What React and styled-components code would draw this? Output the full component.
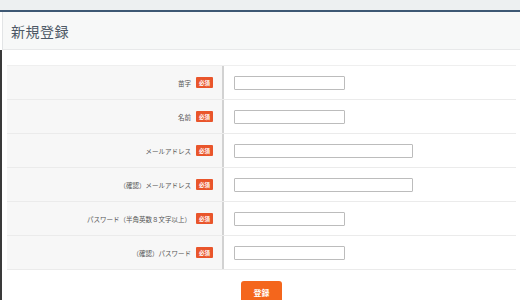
import React from 'react';
import styled, { createGlobalStyle } from 'styled-components';

const GlobalStyle = createGlobalStyle`
  html, body {
    margin: 0;
    padding: 0;
    background: #ffffff;
  }
  body {
    width: 520px;
    height: 300px;
    overflow: hidden;
    font-family: "Noto Sans CJK JP", "Noto Sans", sans-serif;
  }
`;

const StyledPage = styled.div`
  width: 520px;
  height: 300px;
  overflow: hidden;
  display: flex;
  flex-direction: column;
`;

const StyledTopStrip = styled.div`
  flex-shrink: 0;
  height: 10px;
  background-color: #edf0f1;
  border-bottom: 2px solid #3d5874;
`;

const StyledHeader = styled.div`
  flex-shrink: 0;
  height: 37px;
  margin-left: 2px;
  background-color: #f7f8f8;
  border-left: 1px solid #e2e4e6;
  border-bottom: 1px solid #e8e9ea;
  display: flex;
  align-items: center;
  padding-left: 8px;
`;

const StyledTitle = styled.h1`
  margin: 0;
  font-family: "Liberation Serif", "Noto Sans CJK JP", serif;
  font-weight: 400;
  font-size: 14px;
  letter-spacing: 0.5px;
  color: #4d5866;
`;

const StyledBody = styled.div`
  flex-shrink: 0;
  min-height: 260px;
  border-left: 2px solid #3a3a3a;
  padding: 15px 4px 0 5px;
  display: flex;
  flex-direction: column;
  align-items: center;
`;

const StyledTable = styled.div`
  width: 100%;
  border-top: 1px solid #efefef;
`;

const StyledRow = styled.div`
  height: 34px;
  box-sizing: border-box;
  display: grid;
  grid-template-columns: 217px 1fr;
  border-bottom: 1px solid #ebebeb;
`;

const StyledLabelCell = styled.div`
  background-color: #f7f7f7;
  border-right: 2px solid #d2d2d2;
  display: flex;
  align-items: center;
  justify-content: flex-end;
  padding-right: 9px;
  gap: 5px;
`;

const StyledLabel = styled.span`
  font-size: 6.5px;
  color: #555555;
  white-space: nowrap;
`;

const StyledBadge = styled.span`
  width: 17px;
  height: 11px;
  background-color: #e9552b;
  color: #ffffff;
  font-size: 5.5px;
  font-weight: 700;
  display: flex;
  align-items: center;
  justify-content: center;
  border-radius: 1px;
`;

const StyledInputCell = styled.div`
  display: flex;
  align-items: center;
  padding-left: 10px;
`;

const StyledInput = styled.input`
  width: ${props => (props.$wide ? '179px' : '111px')};
  height: 14px;
  box-sizing: border-box;
  border: 1px solid #bcbcbc;
  border-radius: 1px;
  padding: 0 3px;
  font-size: 8px;
  background: #ffffff;
  outline: none;
`;

const StyledButton = styled.button`
  flex-shrink: 0;
  margin-top: 11px;
  width: 41px;
  height: 22px;
  border: none;
  border-radius: 3px;
  background-color: #f4661c;
  color: #ffffff;
  font-family: "Noto Sans CJK JP", sans-serif;
  font-size: 8px;
  font-weight: 700;
  padding: 0;
  cursor: pointer;
`;

const fields = [
  { label: '苗字', wide: false },
  { label: '名前', wide: false },
  { label: 'メールアドレス', wide: true },
  { label: '（確認）メールアドレス', wide: true },
  { label: 'パスワード（半角英数８文字以上）', wide: false },
  { label: '（確認）パスワード', wide: false },
];

const App = () => {
  return (
    <StyledPage>
      <GlobalStyle />
      <StyledTopStrip />
      <StyledHeader>
        <StyledTitle>新規登録</StyledTitle>
      </StyledHeader>
      <StyledBody>
        <StyledTable>
          {fields.map(field => (
            <StyledRow key={field.label}>
              <StyledLabelCell>
                <StyledLabel>{field.label}</StyledLabel>
                <StyledBadge>必須</StyledBadge>
              </StyledLabelCell>
              <StyledInputCell>
                <StyledInput type="text" $wide={field.wide} />
              </StyledInputCell>
            </StyledRow>
          ))}
        </StyledTable>
        <StyledButton type="button">登録</StyledButton>
      </StyledBody>
    </StyledPage>
  );
};

export default App;
